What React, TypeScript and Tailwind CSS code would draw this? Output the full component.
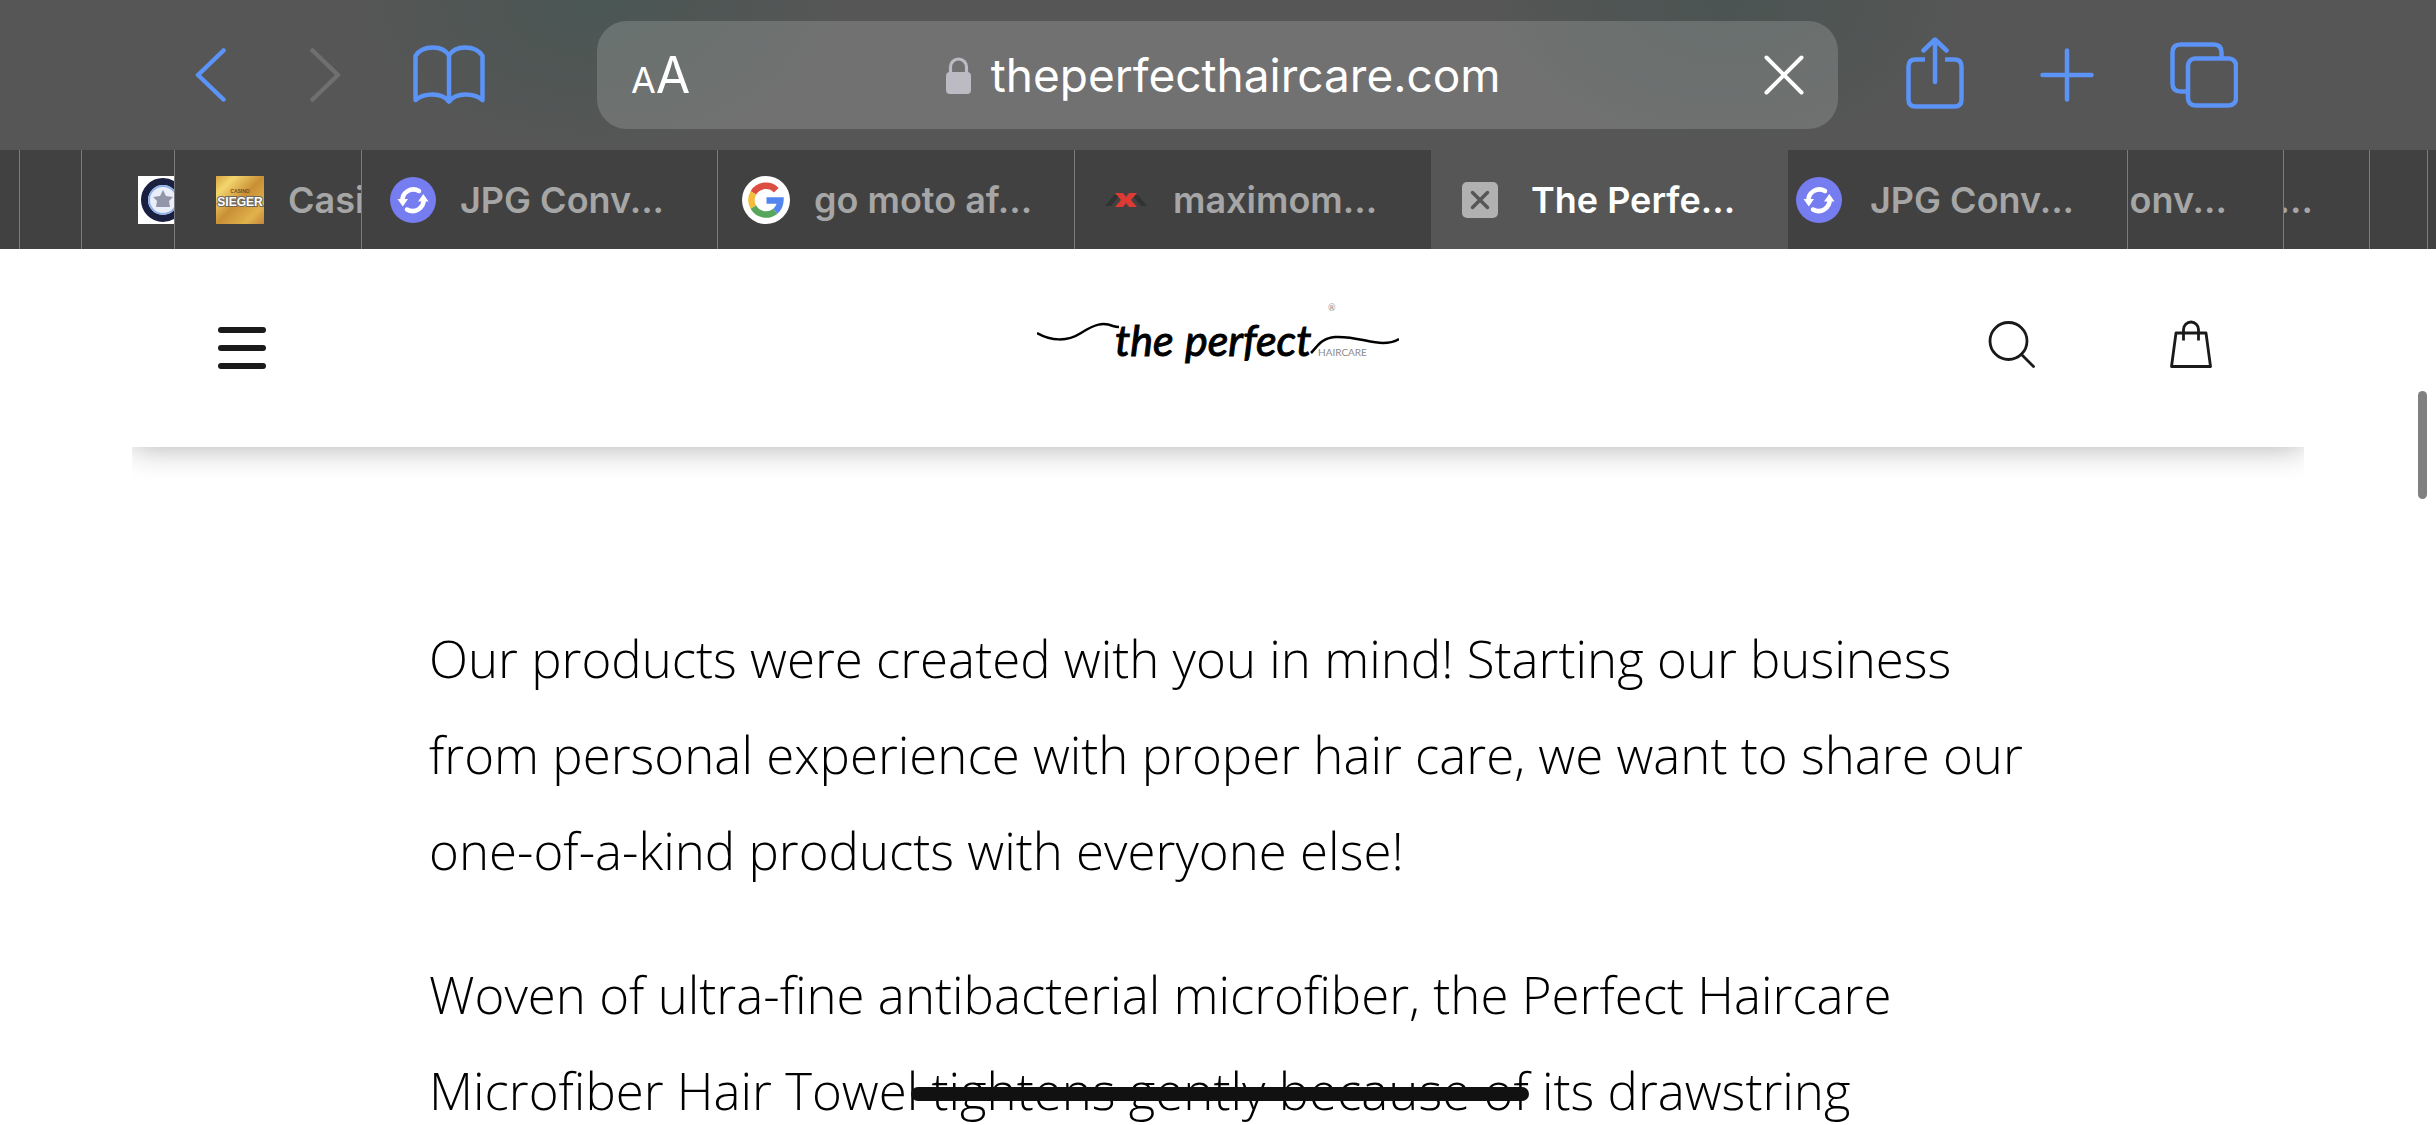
import type { ReactNode } from 'react';
import clsx from 'clsx';

function BackIcon() {
  return (
    <svg className="h-[54px] w-[31px]" viewBox="0 0 31 54" fill="none" stroke="currentColor" strokeWidth="4.5" strokeLinecap="round" strokeLinejoin="round">
      <path d="M28.5 2.5 3 27l25.500 24.500" />
    </svg>
  );
}

function ForwardIcon() {
  return (
    <svg className="h-[54px] w-[31px]" viewBox="0 0 31 54" fill="none" stroke="currentColor" strokeWidth="4.5" strokeLinecap="round" strokeLinejoin="round">
      <path d="M2.500 2.500 28 27 2.500 51.500" />
    </svg>
  );
}

function BookIcon() {
  return (
    <svg className="h-[60px] w-[72px]" viewBox="0 0 72 60" fill="none" stroke="currentColor" strokeWidth="4.500" strokeLinecap="round" strokeLinejoin="round">
      <path d="M36 10.500C33 5.500 27.500 2.500 20 2.500c-8.500 0-14.500 3.500-17.500 8.500v44c4-3.500 10-5.500 17-5.500 7 0 13 2.500 16.500 7 3.500-4.500 9.500-7 16.500-7s13 2 17 5.500V11c-3-5-9-8.500-17.500-8.500-7.500 0-13 3-16 8ZM36 10.500V56" />
    </svg>
  );
}

function ShareIcon() {
  return (
    <svg className="h-[72px] w-[58px]" viewBox="0 0 58 72" fill="none" stroke="currentColor" strokeWidth="4.500" strokeLinecap="round" strokeLinejoin="round">
      <path d="M29 45V3M17.500 13.500 29 2.500l11.500 11" />
      <path strokeLinecap="butt" d="M19 22.500H9.500q-7 0-7 7v33q0 7 7 7h39q7 0 7-7v-33q0-7-7-7H39" />
    </svg>
  );
}

function PlusIcon() {
  return (
    <svg className="size-[54px]" viewBox="0 0 54 54" fill="none" stroke="currentColor" strokeWidth="4.500" strokeLinecap="round">
      <path d="M27 2.500v49M2.500 27h49" />
    </svg>
  );
}

function TabsIcon() {
  return (
    <svg className="h-[66px] w-[68px]" viewBox="0 0 68 66" fill="none" stroke="currentColor" strokeWidth="4.500">
      <rect x="18" y="16.500" width="48" height="47" rx="7" />
      <path d="M17.500 49.500H10.500q-8 0-8-8v-31q0-8 8-8h33q8 0 8 8V16" />
    </svg>
  );
}

function ConvertIcon() {
  return (
    <svg className="size-[46px] shrink-0" viewBox="0 0 46 46" fill="none">
      <circle cx="23" cy="23" r="23" fill="#767df0" />
      <path d="M12.500 24.500a11 11 0 0 1 16.500-10.500M33.500 22a11 11 0 0 1-16.500 10.500" stroke="#fff" strokeWidth="4.500" strokeLinecap="round" />
      <path d="M7.500 22h10.500l-5.200 7.500ZM28 24.500h10.500L33.300 17Z" fill="#fff" />
    </svg>
  );
}

function GoogleIcon() {
  return (
    <svg className="size-12 shrink-0" viewBox="0 0 48 48" fill="none" strokeWidth="6.500">
      <circle cx="24" cy="24" r="24" fill="#fff" />
      <path d="M34.300 14.200A14.500 14.500 0 0 0 11.400 16.800" stroke="#dc4e41" />
      <path d="M11.400 16.800a14.500 14.500 0 0 0 0 14.400" stroke="#f4bd3e" />
      <path d="M11.400 31.200a14.500 14.500 0 0 0 21.900 4" stroke="#57a65b" />
      <path d="M33.300 35.200A14.500 14.500 0 0 0 38.400 24.500H24.500" stroke="#5484ed" />
    </svg>
  );
}

function MaximomIcon() {
  return (
    <svg className="h-12 w-[46px] shrink-0" viewBox="0 0 46 48">
      <path d="m2 30 9-11h6L8 30ZM44 30 35 19h-6l9 11Z" fill="#2f3433" />
      <path d="M12 17h8l3 4 3-4h8l-6 7 6 7h-8l-3-4-3 4h-8l6-7Z" fill="#dd3a33" />
    </svg>
  );
}

function SiegerIcon() {
  return (
    <svg className="size-12 shrink-0" viewBox="0 0 48 48">
      <defs>
        <linearGradient id="gold" x1="0" y1="0" x2="1" y2="1">
          <stop offset="0" stopColor="#d9a53f" />
          <stop offset=".2" stopColor="#f3d56e" />
          <stop offset=".5" stopColor="#c98f35" />
          <stop offset=".8" stopColor="#e0b24c" />
          <stop offset="1" stopColor="#c4853a" />
        </linearGradient>
      </defs>
      <path fill="url(#gold)" d="M0 0h48v48H0z" />
      <text x="24" y="17" textAnchor="middle" fontSize="5" fill="#6b5326" fontFamily="Liberation Sans">CASINO</text>
      <text x="24" y="30" textAnchor="middle" fontSize="12" fontWeight="700" fill="#fff" stroke="#6d675c" strokeWidth="2" paintOrder="stroke" fontFamily="Liberation Sans">SIEGER</text>
    </svg>
  );
}

function BadgeIcon() {
  return (
    <svg className="size-12 shrink-0" viewBox="0 0 48 48">
      <path fill="#fff" d="M0 0h48v48H0z" />
      <circle cx="25" cy="24" r="18.500" fill="#e9eef9" stroke="#1b1f40" strokeWidth="7" />
      <circle cx="25" cy="24" r="14" fill="none" stroke="#8fb0ea" strokeWidth="2" />
      <path d="m25 14 3 6 7 1-4 4 1 6H18l1-6-4-4 7-1Z" fill="#9296a8" />
    </svg>
  );
}

function CloseBox() {
  return (
    <svg className="size-[38px] shrink-0" viewBox="0 0 38 38">
      <rect x="1" y="1" width="36" height="36" rx="5" fill="#b1b1b1" />
      <path d="m11.500 11.500 15 15m0-15-15 15" stroke="#565656" strokeWidth="3.500" strokeLinecap="round" />
    </svg>
  );
}

function Logo() {
  return (
    <svg className="h-[90px] w-[362px]" viewBox="0 0 362 90" fill="none" stroke="#000">
      <path d="M0 34C14 42 30 43 44 34 58 25 66 23 76 27q3 1 6 1" strokeWidth="2.500" />
      <path d="M274 54c6-6 10-15 24-16 20-1 34 6 48 6q9 0 16-4" strokeWidth="2.500" />
      <g fill="#000" strokeWidth="1" fontFamily="Lato" fontStyle="italic">
        <text x="78" y="57" fontSize="43">the</text>
        <text x="148" y="57" fontSize="43">perfect</text>
      </g>
      <g fill="#8a8a8a" stroke="none" fontFamily="Lato">
        <text x="281" y="57" fontSize="10">HAIRCARE</text>
        <text x="291" y="12" fontSize="9">®</text>
      </g>
    </svg>
  );
}

type Tab = { icon?: ReactNode; title?: string; className: string; active?: boolean };

const tabs: Tab[] = [
  { className: '' },
  { className: 'border-l' },
  { icon: <BadgeIcon />, className: 'border-l pl-14' },
  { icon: <SiegerIcon />, title: 'Casi', className: 'border-l pl-[41px] gap-6' },
  { icon: <ConvertIcon />, title: 'JPG Conv...', className: 'border-l pl-7 gap-6' },
  { icon: <GoogleIcon />, title: 'go moto af...', className: 'border-l pl-6 gap-6' },
  { icon: <MaximomIcon />, title: 'maximom...', className: 'border-l pl-7 gap-6' },
  { icon: <CloseBox />, title: 'The Perfe...', className: 'pl-[30px] gap-8', active: true },
  { icon: <ConvertIcon />, title: 'JPG Conv...', className: 'pl-2 gap-7' },
  { title: 'onv...', className: 'border-l justify-end pr-14' },
  { title: '...', className: 'border-l justify-end pr-14' },
  { className: 'border-l' },
  { className: 'border-l' },
];

function Toolbar() {
  return (
    <div className="flex h-[150px] items-center bg-[#565656] bg-[radial-gradient(ellipse_240px_150px_at_24.500%_0,#4a5754,transparent),radial-gradient(ellipse_240px_150px_at_70.800%_0,#4a5452,transparent)] px-[198px] text-[#5b93f7]">
      <button aria-label="Back" className="-ml-[3px] mr-21"><BackIcon /></button>
      <button aria-label="Forward" disabled className="mr-18 text-[#6f6f6f]"><ForwardIcon /></button>
      <button aria-label="Bookmarks" className="mr-28"><BookIcon /></button>
      <div className="flex h-[108px] flex-1 items-center justify-between rounded-[30px] bg-white/16 px-[34px] text-white">
        <button aria-label="Text size" className="-mr-2 flex items-baseline font-[Inter] leading-none">
          <span className="text-[36px]">A</span>
          <span className="text-[50px]">A</span>
        </button>
        <button className="flex items-center gap-5 font-[Inter] text-[46px] leading-none">
          <svg className="h-[37px] w-[25px] text-[#bcbac2]" viewBox="0 0 25 37" fill="none">
            <rect y="15" width="25" height="22" rx="4" fill="currentColor" />
            <path d="M4.500 17V10a8 8 0 0 1 16 0v7" stroke="currentColor" strokeWidth="3.200" />
          </svg>
          theperfecthaircare.com
        </button>
        <button aria-label="Stop loading">
          <svg className="size-10" viewBox="0 0 40 40" stroke="currentColor" strokeWidth="4" strokeLinecap="round">
            <path d="m2.500 2.500 35 35m0-35-35 35" />
          </svg>
        </button>
      </div>
      <button aria-label="Share" className="ml-17 pb-1"><ShareIcon /></button>
      <button aria-label="New tab" className="ml-19"><PlusIcon /></button>
      <button aria-label="Show tabs" className="ml-19"><TabsIcon /></button>
    </div>
  );
}

function TabBar() {
  return (
    <nav className="grid h-[99px] grid-cols-[19fr_62fr_93fr_187fr_356fr_357fr_357fr_357fr_339fr_156fr_86fr_58fr_9fr] bg-[#414141]">
      {tabs.map((tab, i) => (
        <button
          key={i}
          className={clsx(
            'flex min-w-0 items-center overflow-hidden border-[#7b7b7b] font-[Inter] text-[36px] font-semibold whitespace-nowrap',
            tab.active ? 'bg-[#565656] text-white' : 'text-[#a6a6a6]',
            tab.className,
          )}
        >
          {tab.icon}
          {tab.title && <span>{tab.title}</span>}
        </button>
      ))}
    </nav>
  );
}

function SiteHeader() {
  return (
    <header className="mx-[132px] overflow-hidden pb-8">
      <div className="grid h-[198px] grid-cols-[1fr_auto_1fr] items-center bg-white px-[92px] text-[#1a1a1a] shadow-[0_0_30px_rgba(0,0,0,0.32)]">
        <button aria-label="Menu" className="-ml-1.5 flex w-12 flex-col gap-3">
          <span className="h-1.5 rounded-full bg-current" />
          <span className="h-1.5 rounded-full bg-current" />
          <span className="h-1.5 rounded-full bg-current" />
        </button>
        <a href="#" aria-label="The Perfect Haircare" className="pb-2"><Logo /></a>
        <div className="flex items-center justify-end gap-[134px] pb-2">
          <button aria-label="Search">
            <svg className="size-12" viewBox="0 0 48 48" fill="none" stroke="currentColor" strokeWidth="2.800" strokeLinecap="round">
              <circle cx="20.500" cy="21" r="18.500" />
              <path d="m33.500 34.500 12 12" />
            </svg>
          </button>
          <button aria-label="Bag">
            <svg className="h-12 w-[42px]" viewBox="0 0 42 48" fill="none" stroke="currentColor" strokeWidth="2.800" strokeLinejoin="round">
              <path d="M6 13h30l4.500 33.500h-39Z" />
              <path d="M13.500 20.500V9.500a7.500 7.500 0 0 1 15 0v11" />
            </svg>
          </button>
        </div>
      </div>
    </header>
  );
}

export default function App() {
  return (
    <div className="relative flex h-screen flex-col overflow-hidden bg-white">
      <div className="shrink-0">
        <Toolbar />
        <TabBar />
      </div>
      <div className="shrink-0"><SiteHeader /></div>
      <main className="shrink-0 space-y-12 px-[429px] pt-[131px] font-['Open_Sans'] text-[51px] leading-[96px] font-light whitespace-nowrap text-black">
        <p>
          Our products were created with you in mind! Starting our business<br />
          from personal experience with proper hair care, we want to share our<br />
          one-of-a-kind products with everyone else!
        </p>
        <p>
          Woven of ultra-fine antibacterial microfiber, the Perfect Haircare<br />
          Microfiber Hair Towel{' '}
          <span className="relative">
            tightens gently because of
            <span className="absolute top-8 right-0 -left-5 h-3.5 rounded-full bg-[#111]" />
          </span>{' '}
          its drawstring
        </p>
      </main>
      <div className="absolute top-[391px] right-[9px] h-27 w-[9px] rounded-full bg-[#808080]" />
    </div>
  );
}
